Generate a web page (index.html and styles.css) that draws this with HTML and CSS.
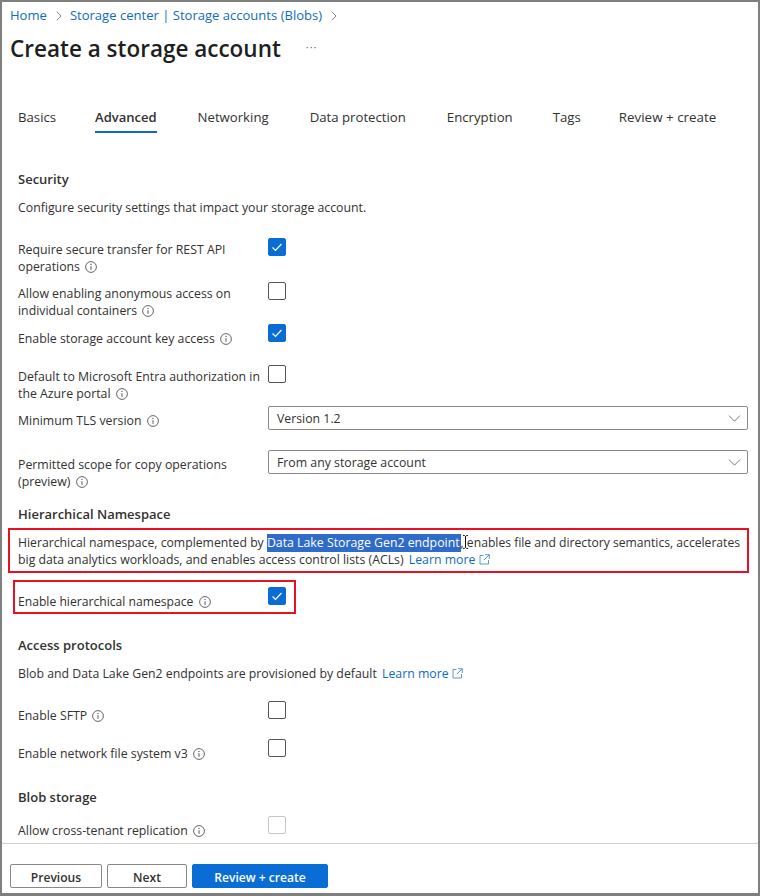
FILE: index.html
```html
<!DOCTYPE html>
<html lang="en">
<head>
<meta charset="utf-8">
<title>Create a storage account</title>
<link rel="stylesheet" href="styles.css">
</head>
<body>
<svg class="defs" width="0" height="0" aria-hidden="true">
  <symbol id="info" viewBox="0 0 12 12"><circle cx="6" cy="6" r="5.4" fill="none" stroke="#555" stroke-width=".9"/><path d="M6 5.2v3.6" stroke="#555" stroke-width="1" fill="none"/><circle cx="6" cy="3.4" r=".65" fill="#555"/></symbol>
  <symbol id="tick" viewBox="0 0 18 18"><path d="M4.500 9.500l3 3 6-6.500" fill="none" stroke="#fff" stroke-width="1.200"/></symbol>
  <symbol id="chev" viewBox="0 0 14 8"><path d="M.7.7L7 7l6.300-6.300" fill="none" stroke="#666" stroke-width="1"/></symbol>
  <symbol id="ext" viewBox="0 0 11 11"><path d="M4.500 1.500H1v8.500h8.500V6M6 .7h4.300V5M10.300.7L5 6" fill="none" stroke="#4a90c8" stroke-width=".9"/></symbol>
  <symbol id="crumb" viewBox="0 0 6 10"><path d="M.7.7L5 5 .7 9.300" fill="none" stroke="#777" stroke-width=".9"/></symbol>
</svg>
<div class="frame">
  <main class="content">
    <nav class="crumbs">
      <a>Home</a><svg class="crumb-sep"><use href="#crumb"/></svg>
      <a>Storage center | Storage accounts (Blobs)</a><svg class="crumb-sep"><use href="#crumb"/></svg>
    </nav>
    <header class="title-row">
      <h1>Create a storage account</h1>
      <span class="more">···</span>
    </header>
    <div class="tabs">
      <span class="tab tab-first">Basics</span>
      <span class="tab active">Advanced</span>
      <span class="tab tab-wide">Networking</span>
      <span class="tab tab-wide">Data protection</span>
      <span class="tab">Encryption</span>
      <span class="tab tab-tags">Tags</span>
      <span class="tab tab-last">Review + create</span>
    </div>

    <section class="pad">
      <h2 class="h-security">Security</h2>
      <p class="desc">Configure security settings that impact your storage account.</p>

      <div class="row r-1">
        <div class="label">Require secure transfer for REST API operations <svg class="info"><use href="#info"/></svg></div>
        <span class="check on"><svg><use href="#tick"/></svg></span>
      </div>
      <div class="row r-2">
        <div class="label">Allow enabling anonymous access on individual containers <svg class="info"><use href="#info"/></svg></div>
        <span class="check"></span>
      </div>
      <div class="row r-3">
        <div class="label low">Enable storage account key access <svg class="info"><use href="#info"/></svg></div>
        <span class="check on"><svg><use href="#tick"/></svg></span>
      </div>
      <div class="row r-4">
        <div class="label">Default to Microsoft Entra authorization in the Azure portal <svg class="info"><use href="#info"/></svg></div>
        <span class="check"></span>
      </div>
      <div class="row r-5">
        <div class="label low">Minimum TLS version <svg class="info"><use href="#info"/></svg></div>
        <div class="select">Version 1.2<svg class="chev"><use href="#chev"/></svg></div>
      </div>
      <div class="row r-6">
        <div class="label low">Permitted scope for copy operations (preview) <svg class="info"><use href="#info"/></svg></div>
        <div class="select">From any storage account<svg class="chev"><use href="#chev"/></svg></div>
      </div>

      <h2 class="h-hier">Hierarchical Namespace</h2>
    </section>

    <div class="callout">
      <p><span class="lead">Hierarchical namespace, complemented by </span><span class="sel">Data Lake Storage Gen2 endpoint</span><span class="tight">, enables file and directory semantics, accelerates</span> big data analytics workloads, and enables access control lists (ACLs) <a class="link">Learn more <svg class="ext"><use href="#ext"/></svg></a></p>
      <svg class="ibeam" viewBox="0 0 7 14"><path d="M1 .6h1.500L3.500 1.500 4.500.6H6M3.500 1.500v11M1 13.400h1.500l1-.9 1 .9H6" fill="none" stroke="#111" stroke-width="1"/></svg>
    </div>

    <div class="callout-row">
      <div class="label tight">Enable hierarchical namespace <svg class="info"><use href="#info"/></svg></div>
      <span class="check on"><svg><use href="#tick"/></svg></span>
    </div>

    <section class="pad">
      <h2 class="h-access">Access protocols</h2>
      <p class="desc">Blob and Data Lake Gen2 endpoints are provisioned by default <a class="link link-gap">Learn more <svg class="ext"><use href="#ext"/></svg></a></p>
      <div class="row r-sftp">
        <div class="label low">Enable SFTP <svg class="info"><use href="#info"/></svg></div>
        <span class="check"></span>
      </div>
      <div class="row r-nfs">
        <div class="label low">Enable network file system v3 <svg class="info"><use href="#info"/></svg></div>
        <span class="check"></span>
      </div>
      <h2 class="h-blob">Blob storage</h2>
      <div class="row r-cross">
        <div class="label low">Allow cross-tenant replication <svg class="info"><use href="#info"/></svg></div>
        <span class="check off"></span>
      </div>
    </section>
  </main>
  <footer class="footer">
    <button class="btn b-prev">Previous</button>
    <button class="btn b-next">Next</button>
    <button class="btn primary">Review + create</button>
  </footer>
</div>
</body>
</html>
```
FILE: styles.css
```css
* { box-sizing: border-box; }
html, body { margin: 0; padding: 0; background: #fff; }
body { font-family: "Open Sans", "Liberation Sans", sans-serif; font-size: 12.3px; line-height: 17px; color: #323130; }
.defs { position: absolute; }
.frame { width: 760px; height: 896px; border: 2px solid #7f7f7f; border-width: 2px 2px 3px 2px; display: flex; flex-direction: column; overflow: hidden; }
.content { flex: 1; overflow: hidden; min-height: 0; }
.crumbs { display: flex; align-items: center; padding: 5px 0 0 8px; height: 22px; font-size: 13.05px; }
.crumbs a { color: #0f6cbd; }
.crumb-sep { width: 6px; height: 10px; margin: 0 8px 0 9px; }
.title-row { display: flex; align-items: center; padding: 0 0 0 8px; height: 33px; margin-top: 8px; }
h1 { margin: 0; font-size: 22.500px; line-height: 28px; font-weight: 600; color: #201f1e; }
.more { margin-left: 25px; font-size: 11px; color: #666; line-height: 14px; position: relative; top: -2px; letter-spacing: 1px; }
.tabs { display: flex; margin: 44px 0 0 16px; height: 33px; }
.tab { margin-right: 40px; line-height: 17px; white-space: nowrap; font-size: 13.200px; }
.tab-first { margin-right: 39px; }
.tab-wide { margin-right: 41px; }
.tab-tags { margin-right: 38px; }
.tab-last { font-size: 13.400px; margin-right: 0; }
.tab.active { font-weight: 600; font-size: 13px; margin-right: 41px; position: relative; }
.tab.active::after { content: ""; position: absolute; left: 0; right: 0; top: 22px; height: 2px; background: #0f6cbd; }
.pad { padding-left: 16px; }
h2 { margin: 0; font-size: 13px; line-height: 17px; font-weight: 600; color: #323130; }
.h-security { margin-top: 29px; }
.desc { margin: 11px 0 0; }
.row { display: flex; }
.label { width: 250px; padding-top: 3px; }
.label.low { padding-top: 6px; }
.r-1 { margin-top: 22px; height: 44px; }
.r-2 { height: 42px; }
.r-3 { height: 41px; }
.r-4 { height: 41px; }
.r-5 { height: 44px; }
.r-6 { height: 56px; }
.check { width: 18px; height: 18px; border: 1px solid #555; border-radius: 2px; background: #fff; display: block; flex: none; }
.check.on { background: #0a6cd5; border-color: #0a6cd5; }
.check.on svg { display: block; width: 18px; height: 18px; margin: -1px; }
.check.off { border-color: #c8c6c4; }
.select { width: 480px; height: 24px; border: 1px solid #8a8886; border-radius: 2px; padding: 3px 0 0 8px; position: relative; }
.chev { position: absolute; right: 6px; top: 8px; width: 13px; height: 7px; }
.info { width: 12px; height: 12px; vertical-align: -2px; margin-left: 2px; }
.h-hier { height: 13px; }
.callout { position: relative; margin: 9px 9px 0 6px; border: 2px solid #e81123; height: 45px; padding: 4px 0 0 8px; }
.callout p { margin: 0; width: 732px; }
.lead { font-size: 12.220px; }
.tight { font-size: 12.150px; }
.sel { background: #2f6bc9; color: #fff; padding: 0 1px 1px 0; }
.ibeam { position: absolute; left: 452px; top: 5px; width: 7px; height: 14px; }
.link { color: #0f6cbd; margin-left: 2px; }
.ext { width: 11px; height: 11px; margin-left: 0; vertical-align: -1px; }
.link-gap { margin-left: 2px; }
.callout-row { display: flex; margin: 7px 0 0 11px; width: 283px; height: 34px; border: 2px solid #e81123; padding: 5px 0 0 3px; }
.callout-row .label { width: 250px; padding-top: 6px; }
.h-access { margin-top: 23px; }
.r-sftp { margin-top: 19px; height: 38px; }
.r-nfs { height: 38px; }
.h-blob { margin-top: 12px; }
.r-cross { margin-top: 10px; }
.footer { height: 50px; flex: none; border-top: 1px solid #d0d0d0; display: flex; align-items: flex-start; padding: 20px 0 0 8px; }
.btn { height: 24px; border: 1px solid #8a8886; border-radius: 2px; background: #fff; font: 600 12.100px/17px "Open Sans", "Liberation Sans", sans-serif; color: #323130; padding: 2px 0 0; margin-right: 5px; }
.b-prev { width: 92px; }
.b-next { width: 80px; }
.primary { width: 136px; background: #0a6cd5; border-color: #0a6cd5; color: #fff; }
```
